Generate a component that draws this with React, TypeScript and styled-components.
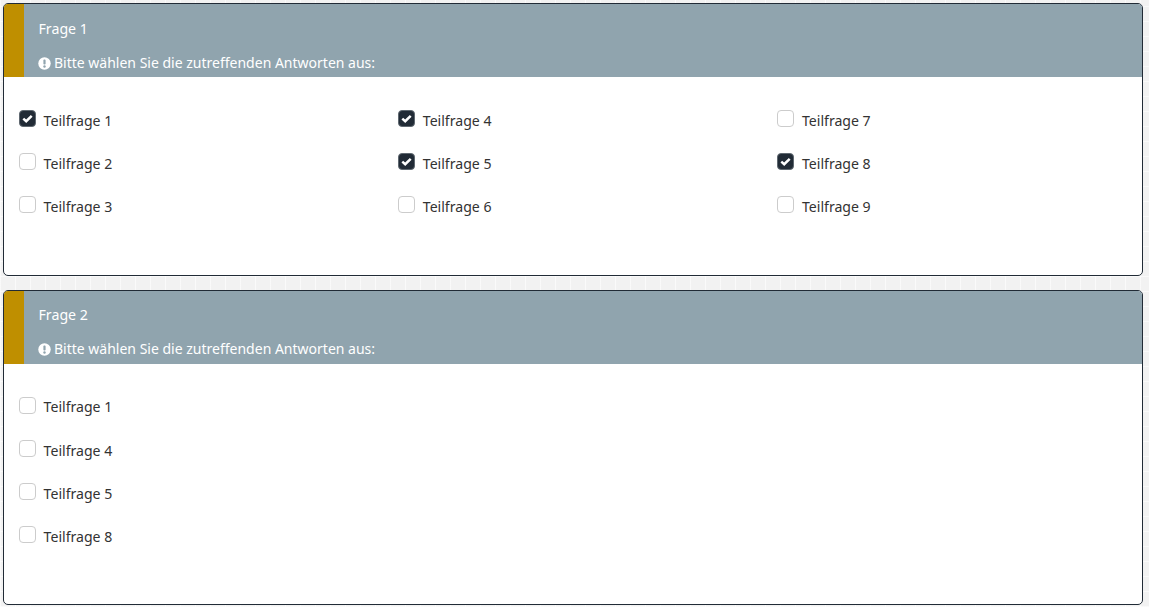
import React from "react";
import styled, {createGlobalStyle} from "styled-components";

const GlobalStyle = createGlobalStyle`
  html, body {
    margin: 0;
    padding: 0;
    height: 100%;
    background-color: #f2f2f2;
    background-image:
      repeating-linear-gradient(90deg, rgba(255,255,255,.6) 0 1px, transparent 1px 15px),
      repeating-linear-gradient(0deg, rgba(255,255,255,.6) 0 1px, transparent 1px 15px);
    font-family: "Noto Sans", "Open Sans", sans-serif;
    overflow: hidden;
  }
`;

const Page = styled.div`
  display: flex;
  flex-direction: column;
  gap: 13.15px;
  padding: 3.4px 6px 0 3px;
`;

const Card = styled.section<{$height: number}>`
  height: ${p => p.$height}px;
  flex: none;
  box-sizing: border-box;
  background: #fff;
  border: 1px solid #212b36;
  border-radius: 5px;
  overflow: hidden;
`;

const Header = styled.header`
  display: flex;
  height: 73px;
  background: #90a4ae;
  color: #fff;
`;

const Accent = styled.div`
  width: 20px;
  background: #bf8f00;
`;

const HeaderText = styled.div`
  display: flex;
  flex-direction: column;
  padding: 14.9px 0 0 14.5px;
  font-size: 14px;
  line-height: 20px;
`;

const Title = styled.div`
  font-size: 14.2px;
`;

const Hint = styled.div`
  display: flex;
  align-items: center;
  gap: 3px;
  margin: 14px 0 0 -0.5px;
`;

const Grid = styled.div`
  display: grid;
  grid-template-columns: repeat(3, 379.2px);
  grid-auto-flow: column;
  grid-template-rows: repeat(3, 43px);
  padding: 21.6px 0 0 15px;
`;

const List = styled.div`
  display: flex;
  flex-direction: column;
  gap: 0.3px;
  padding: 21.75px 0 0 15px;
`;

const Row = styled.label`
  display: flex;
  align-items: center;
  gap: 7.6px;
  height: 43px;
  font-size: 14.1px;
  color: #333;
`;

const Box = styled.span<{$checked: boolean}>`
  display: flex;
  flex: none;
  align-items: center;
  justify-content: center;
  width: 17px;
  height: 17px;
  box-sizing: border-box;
  margin-top: -3.5px;
  border: 1px solid ${p => (p.$checked ? "#5f6870" : "#ccc")};
  border-radius: 4px;
  background: ${p => (p.$checked ? "#212b36" : "#fff")};
`;

const Check = () => (
    <svg width="11" height="9" viewBox="0 0 11 9">
        <path d="M1.3 4.6 L4.2 7.2 L9.7 1.8" fill="none" stroke="#fff" strokeWidth="2.5"/>
    </svg>
);

const AlertIcon = () => (
    <svg width="13" height="13" viewBox="0 0 13 13">
        <circle cx="6.5" cy="6.5" r="6.2" fill="#fff"/>
        <rect x="5.4" y="2.6" width="2.2" height="5" rx="0.8" fill="#90a4ae"/>
        <circle cx="6.5" cy="9.5" r="1.2" fill="#90a4ae"/>
    </svg>
);

const Item = (props: {label: string, checked?: boolean}) => (
    <Row>
        <Box $checked={!!props.checked}>{props.checked && <Check/>}</Box>
        {props.label}
    </Row>
);

const QuestionHeader = (props: {title: string}) => (
    <Header>
        <Accent/>
        <HeaderText>
            <Title>{props.title}</Title>
            <Hint><AlertIcon/>Bitte wählen Sie die zutreffenden Antworten aus:</Hint>
        </HeaderText>
    </Header>
);

const first = [
    {n: 1, checked: true}, {n: 2}, {n: 3},
    {n: 4, checked: true}, {n: 5, checked: true}, {n: 6},
    {n: 7}, {n: 8, checked: true}, {n: 9},
];

export default function App() {
    return (
        <Page>
            <GlobalStyle/>
            <Card $height={273}>
                <QuestionHeader title="Frage 1"/>
                <Grid>
                    {first.map(q => <Item key={q.n} label={`Teilfrage ${q.n}`} checked={q.checked}/>)}
                </Grid>
            </Card>
            <Card $height={315}>
                <QuestionHeader title="Frage 2"/>
                <List>
                    {[1, 4, 5, 8].map(n => <Item key={n} label={`Teilfrage ${n}`}/>)}
                </List>
            </Card>
        </Page>
    );
}
